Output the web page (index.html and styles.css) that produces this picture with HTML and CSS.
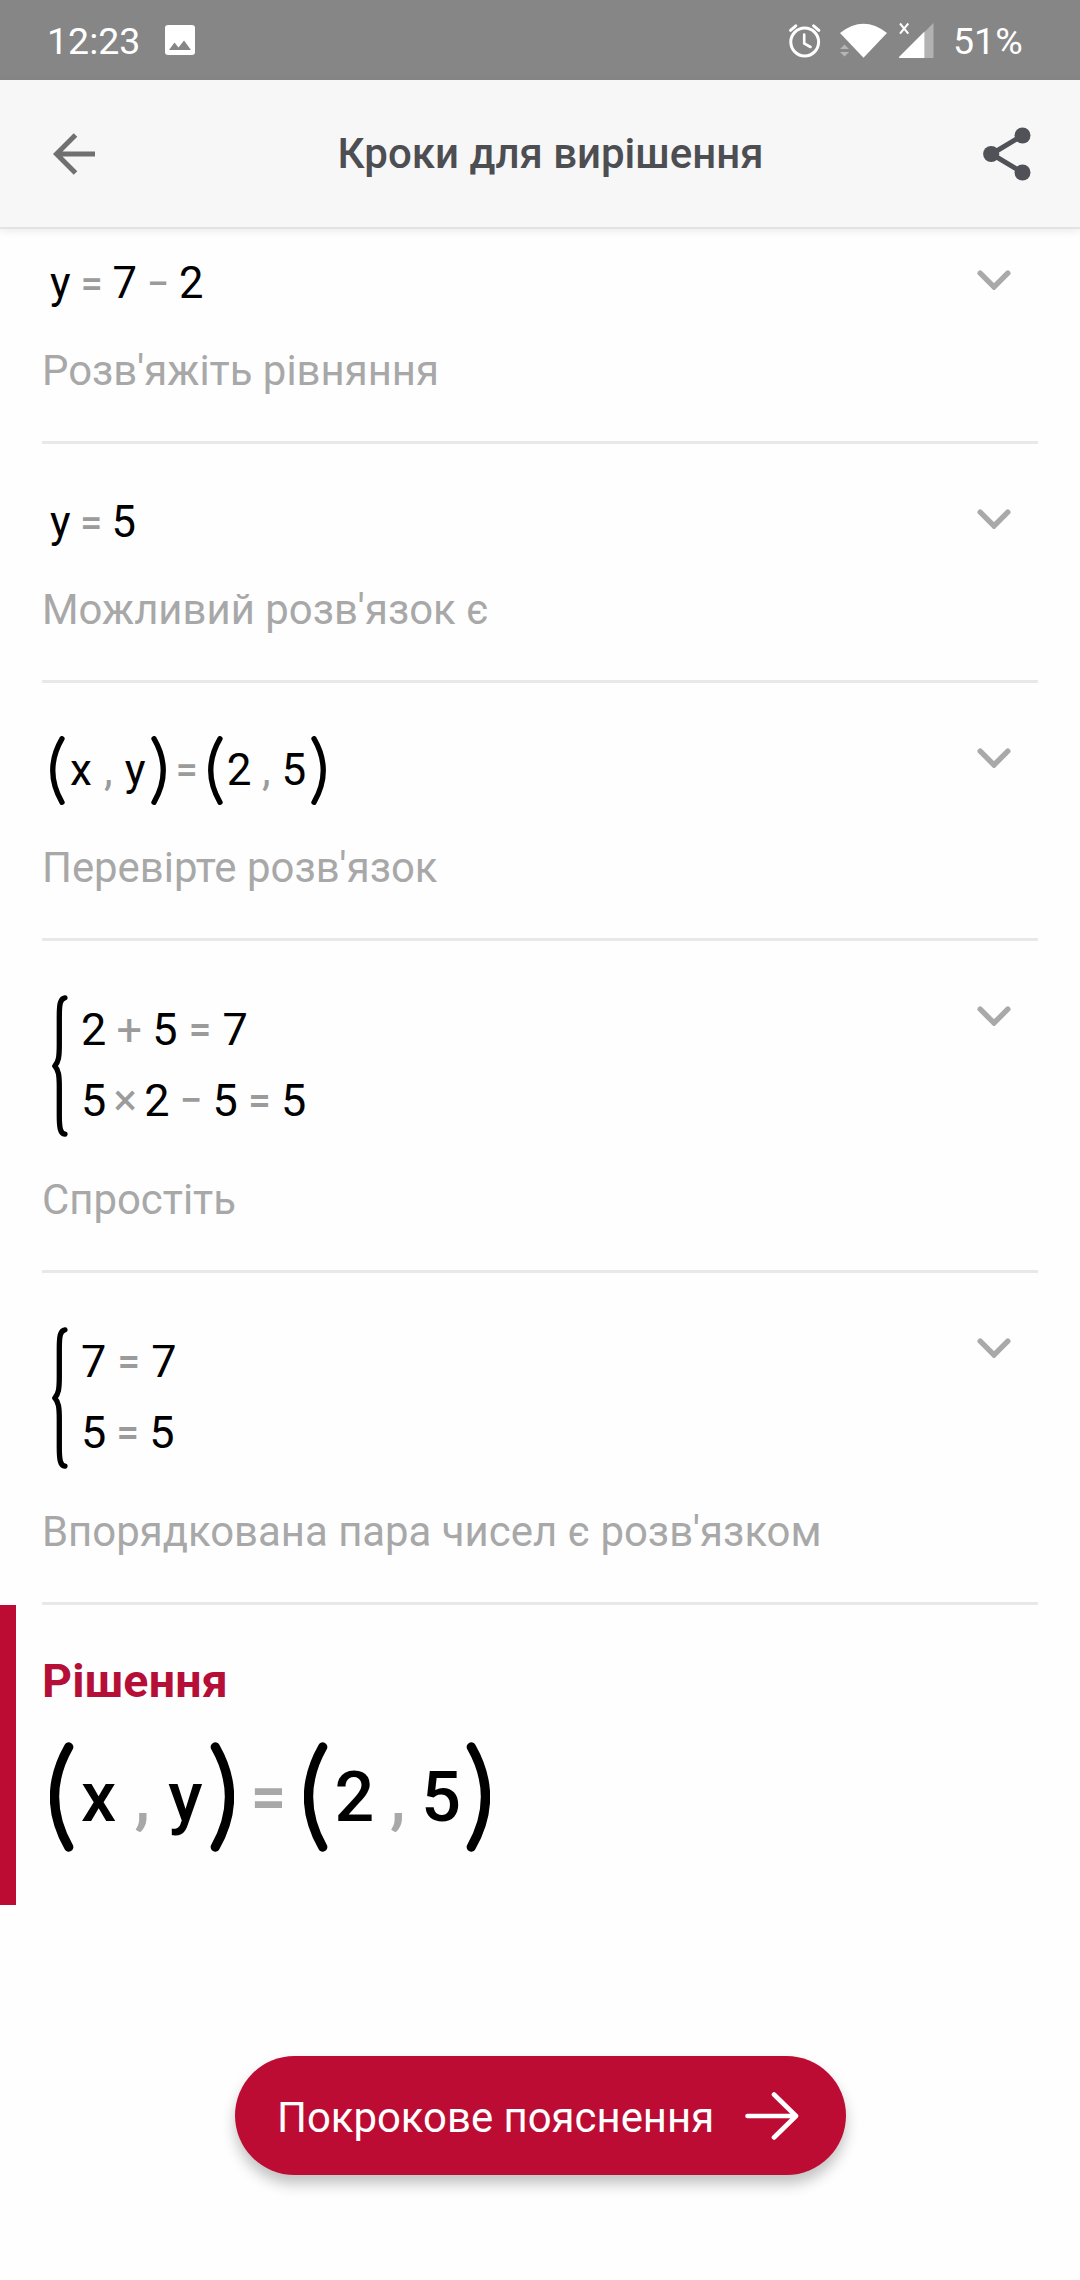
FILE: index.html
```html
<!DOCTYPE html>
<html lang="uk">
<head>
<meta charset="utf-8">
<title>Кроки для вирішення</title>
<link rel="stylesheet" href="styles.css">
</head>
<body>
<svg class="defs" width="0" height="0">
  <symbol id="chevron" viewBox="0 0 34 20"><path d="M3.2 3.2 17 17 30.8 3.2" fill="none" stroke="#a9a9a9" stroke-width="5.4" stroke-linecap="round"/></symbol>
  <symbol id="paren" viewBox="0 0 15 69"><path d="M12 2.7Q-6.500 34.500 12 66.300" fill="none" stroke="#000" stroke-width="5.300" stroke-linecap="round"/></symbol>
  <symbol id="paren-bold" viewBox="0 0 24 110"><path d="M18.700 5Q-9.700 55 18.700 105" fill="none" stroke="#000" stroke-width="9.300" stroke-linecap="round"/></symbol>
  <symbol id="brace" viewBox="0 0 16 142"><path d="M13 2.800C8.200 3.500 7.300 9 7.300 22V50C7.300 62 6.500 67 2.800 71C6.500 75 7.300 80 7.300 92V120C7.300 133 8.200 138.500 13 139.200" fill="none" stroke="#000" stroke-width="5.300" stroke-linecap="round" stroke-linejoin="round"/></symbol>
</svg>

<div class="status">
  <span class="clock">12:23</span>
  <svg class="photo" width="30" height="30" viewBox="0 0 30 30"><path fill="#fff" fill-rule="evenodd" d="M3 0H27Q30 0 30 3V27Q30 30 27 30H3Q0 30 0 27V3Q0 0 3 0ZM4 25H26L19 15.500 13.500 22.500 9.500 17.500Z"/></svg>
  <svg class="signals" width="146" height="40" viewBox="788 20 146 40">
    <g fill="none" stroke="#fff" stroke-linecap="round">
      <circle cx="804.700" cy="42" r="13.900" stroke-width="3"/>
      <path d="M804.200 34.500V43.500L810.500 47" stroke-width="2.600"/>
      <path d="M790.500 30.300 795.800 25.800M818.900 30.300 813.600 25.800" stroke-width="3"/>
    </g>
    <path fill="#fff" d="M840 33Q863.500 14.500 887 33L863.500 57.700Z"/>
    <path fill="#b5b5b5" d="M840 49H849L844.500 44.500ZM840 52H849L844.500 56.500Z"/>
    <path fill="#b2b2b2" d="M933.500 23V58H924.500V32Z"/>
    <path fill="#fff" d="M924.500 31.500V58H900Q898 58 899.500 56.500Z"/>
    <path d="M900 23.500 908.300 33.700M908.300 23.500 900 33.700" stroke="#fff" stroke-width="2"/>
  </svg>
  <span class="battery">51%</span>
</div>

<header class="bar">
  <svg class="back" width="42" height="42" viewBox="0 0 42 42"><path d="M22.500 2 3.500 21 22.500 40M3.500 21H42" fill="none" stroke="#707070" stroke-width="5"/></svg>
  <h1>Кроки для вирішення</h1>
  <svg class="share" width="48" height="54" viewBox="0 0 48 54"><path d="M39.500 8.500 8.500 27 39.500 45.500" fill="none" stroke="#505257" stroke-width="5"/><g fill="#505257"><circle cx="39.500" cy="8.500" r="8"/><circle cx="8.200" cy="27" r="8.100"/><circle cx="39.500" cy="45.500" r="8"/></g></svg>
</header>

<main>
  <section class="step first">
    <div class="body">
      <div class="math simple"><span>y</span><i>=</i><span>7</span><i>−</i><span>2</span></div>
      <p>Розв'яжіть рівняння</p>
    </div>
    <svg class="chevron"><use href="#chevron"/></svg>
  </section>
  <section class="step">
    <div class="body">
      <div class="math simple"><span>y</span><i class="near">=</i><span>5</span></div>
      <p>Можливий розв'язок є</p>
    </div>
    <svg class="chevron"><use href="#chevron"/></svg>
  </section>
  <section class="step">
    <div class="body">
      <div class="math pair"><svg class="paren"><use href="#paren"/></svg><span class="arg">x</span><i class="comma">,</i><span>y</span><svg class="paren close"><use href="#paren"/></svg><i>=</i><svg class="paren"><use href="#paren"/></svg><span>2</span><i class="comma tight">,</i><span>5</span><svg class="paren close"><use href="#paren"/></svg></div>
      <p>Перевірте розв'язок</p>
    </div>
    <svg class="chevron"><use href="#chevron"/></svg>
  </section>
  <section class="step">
    <div class="body">
      <div class="math system"><svg class="brace"><use href="#brace"/></svg>
        <div class="lines">
          <div class="line"><span>2</span><i class="plus">+</i><span>5</span><i class="wide">=</i><span>7</span></div>
          <div class="line"><span>5</span><i class="times">×</i><span>2</span><i>−</i><span>5</span><i>=</i><span>5</span></div>
        </div>
      </div>
      <p>Спростіть</p>
    </div>
    <svg class="chevron"><use href="#chevron"/></svg>
  </section>
  <section class="step">
    <div class="body">
      <div class="math system"><svg class="brace"><use href="#brace"/></svg>
        <div class="lines">
          <div class="line"><span>7</span><i class="wide">=</i><span>7</span></div>
          <div class="line"><span>5</span><i>=</i><span>5</span></div>
        </div>
      </div>
      <p>Впорядкована пара чисел є розв'язком</p>
    </div>
    <svg class="chevron"><use href="#chevron"/></svg>
  </section>

  <section class="result">
    <h2>Рішення</h2>
    <div class="math answer"><svg class="paren"><use href="#paren-bold"/></svg><span>x</span><i class="comma">,</i><span>y</span><svg class="paren close"><use href="#paren-bold"/></svg><i>=</i><svg class="paren"><use href="#paren-bold"/></svg><span class="num">2</span><i class="comma tight">,</i><span>5</span><svg class="paren close last"><use href="#paren-bold"/></svg></div>
  </section>

  <button class="explain"><span>Покрокове пояснення</span><svg width="54" height="48" viewBox="0 0 54 48"><path d="M2.500 24H50M29 2.500 51 24 29 45.500" fill="none" stroke="#fff" stroke-width="4.600" stroke-linecap="round" stroke-linejoin="round"/></svg></button>
</main>
</body>
</html>
```
FILE: styles.css
```css
* { box-sizing: border-box; margin: 0; padding: 0; }
body { width: 1080px; height: 2280px; overflow: hidden; background: #fefefe; font-family: Roboto, "Liberation Sans", sans-serif; color: #000; }
svg { display: block; flex: none; }
.defs { position: absolute; }

.status { display: flex; align-items: center; height: 80px; padding: 0 58px 0 47px; background: #868686; color: #fff; font-size: 37.5px; }
.clock { width: 118px; padding-top: 2px; }
.signals { margin-left: auto; }
.battery { width: 69px; margin-left: 19px; padding-top: 2px; }

.bar { display: flex; align-items: center; justify-content: space-between; height: 149px; padding: 0 49px 0 53px; background: #f7f7f7; border-bottom: 2px solid #e3e3e3; box-shadow: 0 2px 8px rgba(0, 0, 0, .08); position: relative; }
.bar h1 { padding-left: 23px; font-size: 42px; font-weight: 500; line-height: 50px; color: #4d4e52; }

.step { display: flex; justify-content: space-between; margin: 0 42px; padding: 48px 0 45px; border-bottom: 3px solid #e8e8e8; }
.step.first { padding-top: 24px; }
.step p { margin-top: 33px; font-size: 41.9px; line-height: 50px; color: #a8a8a8; white-space: nowrap; }
.chevron { width: 34px; height: 20px; margin: 17px 27px 0 0; }

.math { display: flex; align-items: center; padding-left: 8px; font-size: 44px; line-height: 60px; }
.math i { width: 42px; font-style: normal; font-weight: 500; font-size: 39px; text-align: center; color: #9b9b9b; }
.math i.comma { width: 33px; font-size: 44px; font-weight: 400; }
.math i.comma.tight { width: 30px; }
.simple { height: 60px; padding-top: 2px; font-size: 43.5px; }
.simple i.near { width: 41px; }
.pair { height: 79px; }
.pair span, .pair i { margin-top: -1px; }
.paren { width: 15px; height: 69px; margin-right: 4px; }
.paren.close { transform: scaleX(-1); margin: 0 0 0 5px; }
.pair .arg { margin-left: 1px; }

.system { height: 153px; padding-left: 10px; font-size: 45px; }
.brace { width: 16px; height: 142px; }
.lines { margin: -2px 0 0 13px; }
.line { display: flex; line-height: 71px; }
.system i { width: 43px; font-size: 40px; }
.system i.wide { width: 45px; }
.system i.plus { width: 46px; font-size: 45px; font-weight: 400; }
.system i.times { width: 38px; font-size: 44px; font-weight: 400; }

.result { height: 300px; padding: 49px 0 0 26px; border-left: 16px solid #bd0c33; }
.result h2 { font-size: 46.5px; font-weight: 700; line-height: 54px; letter-spacing: .2px; color: #b50f37; }
.answer { height: 110px; margin-top: 34px; font-size: 70px; font-weight: 500; line-height: 110px; }
.answer i { width: 70px; font-size: 62px; font-weight: 700; color: #a8a8a8; }
.answer i.comma { width: 52px; font-size: 70px; font-weight: 500; }
.answer i.comma.tight { width: 47px; }
.answer .paren { width: 24px; height: 110px; margin-right: 7px; }
.answer .paren.close { margin: 0 0 0 7px; }
.answer .paren.last { margin-left: 5px; }

.explain { display: flex; align-items: center; width: 611px; height: 119px; margin: 151px 0 0 235px; padding: 0 47px 0 42px; justify-content: space-between; border: 0; border-radius: 60px; background: #bd0c33; box-shadow: 0 9px 14px rgba(0, 0, 0, .24); color: #fff; font: 41.9px/50px Roboto, "Liberation Sans", sans-serif; }
.explain span { padding-top: 5px; }
```
